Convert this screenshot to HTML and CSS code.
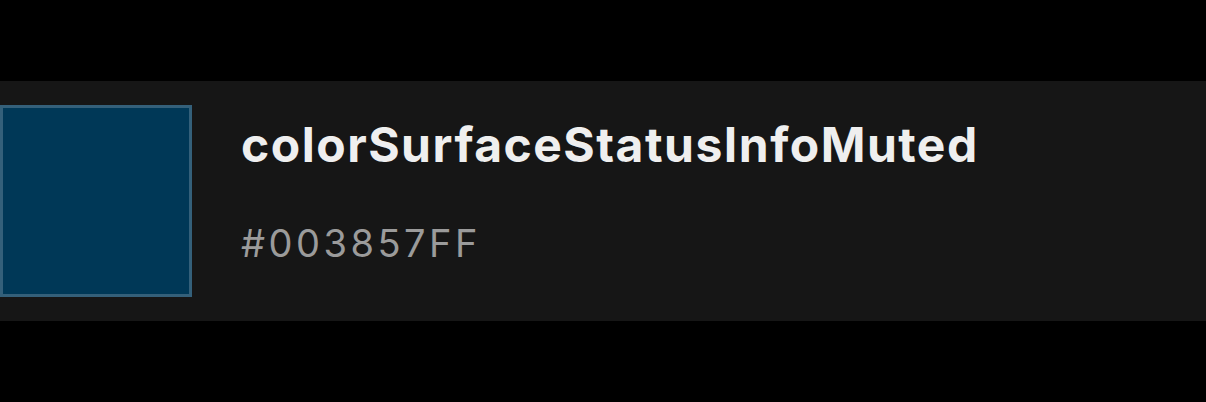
FILE: index.html
```html
<!DOCTYPE html>
<html>
<head>
<meta charset="utf-8">
<link rel="stylesheet" href="styles.css">
</head>
<body>
<div class="page">
  <div class="token-row">
    <div class="swatch"></div>
    <div class="token-info">
      <div class="token-name">colorSurfaceStatusInfoMuted</div>
      <div class="token-value">#003857FF</div>
    </div>
  </div>
</div>
</body>
</html>
```
FILE: styles.css
```css
html, body {
  margin: 0;
  padding: 0;
  background: #000000;
}
.page {
  padding-top: 81px;
  width: 1206px;
  height: 402px;
  box-sizing: border-box;
}
.token-row {
  display: flex;
  align-items: flex-start;
  height: 240px;
  background: #161616;
  box-sizing: border-box;
  padding-top: 24px;
}
.swatch {
  flex: 0 0 auto;
  width: 192px;
  height: 192px;
  box-sizing: border-box;
  background: #003857;
  border: 3px solid #34607a;
}
.token-info {
  display: flex;
  flex-direction: column;
  padding-left: 49px;
  font-family: Inter, "Liberation Sans", sans-serif;
}
.token-name {
  font-size: 48px;
  font-weight: 700;
  color: #efefef;
  line-height: 52px;
  margin-top: 14px;
  letter-spacing: 1.5px;
}
.token-value {
  font-size: 38px;
  font-weight: 400;
  color: #9b9b9b;
  line-height: 46px;
  margin-top: 49px;
  letter-spacing: 3.5px;
}
```
